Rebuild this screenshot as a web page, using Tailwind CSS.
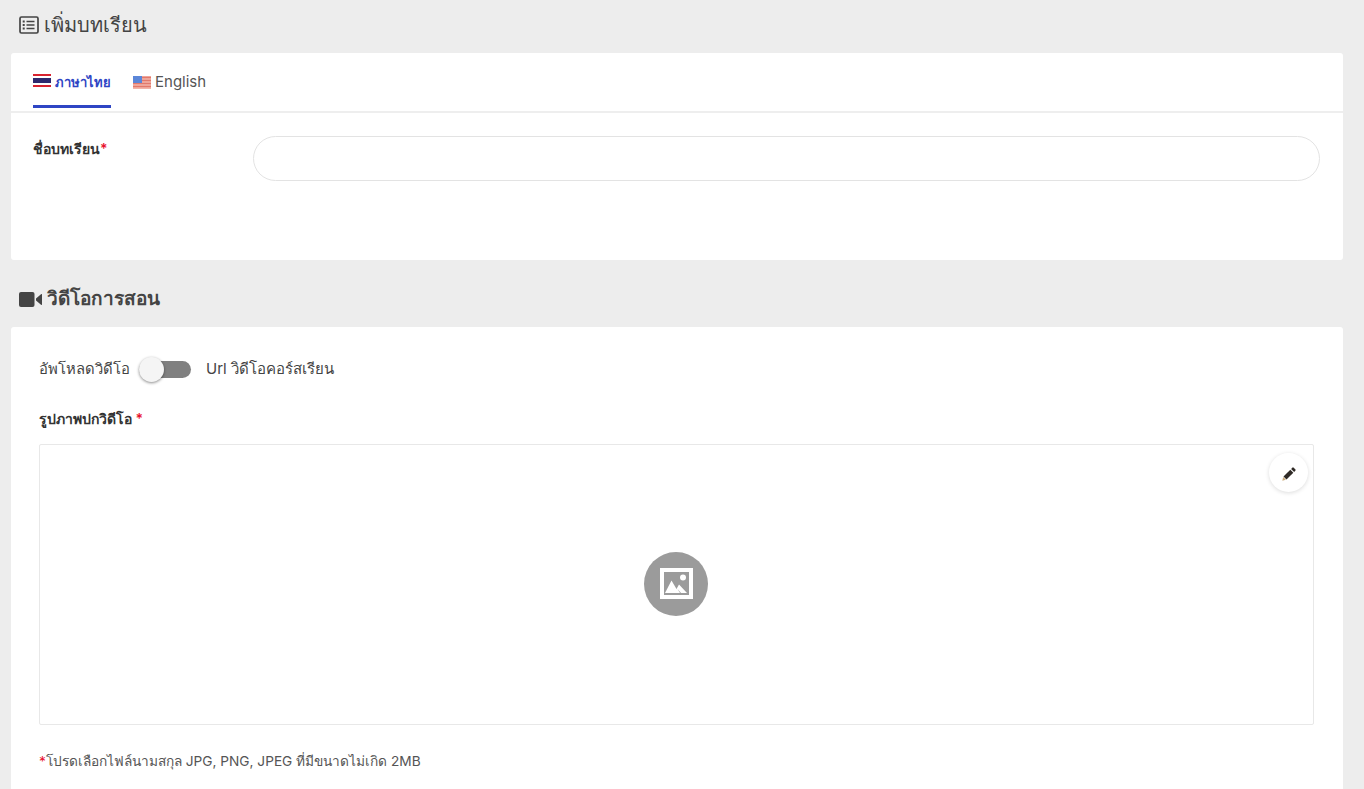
<!DOCTYPE html>
<html lang="th">
<head>
<meta charset="utf-8">
<title>เพิ่มบทเรียน</title>
<script src="https://cdn.jsdelivr.net/npm/@tailwindcss/browser@4"></script>
</head>
<body class="bg-[#ededed] h-[789px] overflow-hidden font-['Inter','Noto_Sans','Noto_Sans_CJK_SC',sans-serif] text-[#3c3c3c]">
<div class="pl-[11px] w-[1343px] box-border">
  <h1 class="h-[53px] flex items-center gap-[5px] pl-[8px] pb-[3px] text-[20px] font-normal text-[#444]">
    <svg class="w-[20px] h-[18px]" viewBox="0 0 20 18" fill="none" stroke="#444" stroke-width="1.7"><rect x="1" y="1" width="18" height="16" rx="1.500"/><path d="M7.500 5.500h8M7.500 9h8M7.500 12.500h8" stroke-width="1.500"/><path d="M3.700 5.500h2M3.700 9h2M3.700 12.500h2" stroke-width="1.800"/></svg>
    <span>เพิ่มบทเรียน</span>
  </h1>
  <section class="bg-white rounded-[3px] h-[207px]">
    <div class="h-[60px] border-b-2 border-[#eeeeee] flex pl-[22px] gap-[22px]">
      <div class="h-[55px] pt-[3px] border-b-[3px] border-[#2e45c4] flex items-center gap-[4px] font-semibold text-[#2e45c4] text-[13px]">
        <svg class="w-[18px] h-[13px]" viewBox="0 0 18 13"><rect width="18" height="13" fill="#d8232f"/><rect y="2" width="18" height="9" fill="#fff"/><rect y="4" width="18" height="5" fill="#2d2a6e"/></svg>
        <span class="relative top-[2px]">ภาษาไทย</span>
      </div>
      <div class="h-[55px] pt-[3px] flex items-center gap-[4px] text-[#555] text-[15px]">
        <svg class="w-[18px] h-[13px]" viewBox="0 0 18 13"><rect width="18" height="13" fill="#f3b5a8"/><path d="M0 1.500h18M0 4.500h18M0 7.500h18M0 10.500h18" stroke="#e2796b" stroke-width="1.300"/><rect width="9" height="7" fill="#5b86d8"/></svg>
        <span>English</span>
      </div>
    </div>
    <div class="flex pl-[22px] pr-[23px] pt-[23px]">
      <label class="w-[220px] pt-[3px] text-[14px] font-semibold text-[#333] leading-[20px]">ชื่อบทเรียน<span class="text-[#e8112d]">*</span></label>
      <input class="flex-1 h-[45px] rounded-full border border-[#e3e3e3] bg-white" type="text">
    </div>
  </section>
  <h2 class="h-[67px] flex items-center gap-[5px] pl-[8px] pt-[12px] text-[19px] font-semibold text-[#444]">
    <svg class="w-[23px] h-[15px]" viewBox="0 0 23 15" fill="#444"><rect width="15.500" height="15" rx="2"/><path d="M17 6.500 22 2.200a.6.6 0 0 1 1 .4v9.800a.6.6 0 0 1-1 .4L17 8.500z"/></svg>
    <span>วิดีโอการสอน</span>
  </h2>
  <section class="bg-white rounded-t-[3px] h-[480px] px-[28px]">
    <div class="pt-[30px] h-[77px] flex items-start text-[#444]">
      <span class="leading-[24px] text-[14.800px]">อัพโหลดวิดีโอ</span>
      <div class="relative w-[52px] h-[17px] bg-[#808080] rounded-full ml-[9px] mt-[4px]">
        <div class="absolute left-0 -top-[4px] w-[25px] h-[25px] rounded-full bg-[#f5f5f5] shadow-[0_1px_3px_rgba(0,0,0,0.45)]"></div>
      </div>
      <span class="leading-[24px] ml-[15px] text-[15px]">Url วิดีโอคอร์สเรียน</span>
    </div>
    <div class="text-[14px] font-semibold text-[#333] leading-[20px] h-[40px] pt-[5px]">รูปภาพปกวิดีโอ <span class="text-[#e8112d]">*</span></div>
    <div class="relative h-[281px] w-[1275px] border border-[#e8e8e8] rounded-[2px] flex items-center justify-center">
      <div class="w-[64px] h-[64px] rounded-full bg-[#9b9b9b] flex items-center justify-center mr-[1px] mb-[2px]">
        <svg class="w-[33px] h-[31px]" viewBox="0 0 33 31"><path fill="#fff" fill-rule="evenodd" d="M0 0h33v31H0zM4 4v23h25V4z"/><circle cx="23" cy="9.500" r="3" fill="#fff"/><path fill="#fff" d="M5 25 11.500 12.500 16.500 21 19 16.500 27 25H21L17.500 21 20 25z"/></svg>
      </div>
      <button class="absolute top-[8px] right-[5px] w-[39px] h-[39px] rounded-full bg-white shadow-[0_1px_4px_rgba(0,0,0,0.14)] flex items-center justify-center">
        <svg class="w-[14px] h-[14px] translate-y-[1px]" viewBox="0 0 14 14"><path fill="#2f2a26" d="M10.300.7a1 1 0 0 1 1.400 0l1.600 1.600a1 1 0 0 1 0 1.400l-1.200 1.200-3-3z"/><path fill="#2f2a26" d="M8.300 2.700l3 3L4.500 12.500l-3-3z"/><path fill="#c9a97a" d="M1.200 10.100l2.700 2.700-3.600.9z"/></svg>
      </button>
    </div>
    <p class="mt-[26px] text-[13.700px] text-[#555] leading-[20px]"><span class="text-[#e8112d]">*</span>โปรดเลือกไฟล์นามสกุล JPG, PNG, JPEG ที่มีขนาดไม่เกิด 2MB</p>
  </section>
</div>
</body>
</html>
